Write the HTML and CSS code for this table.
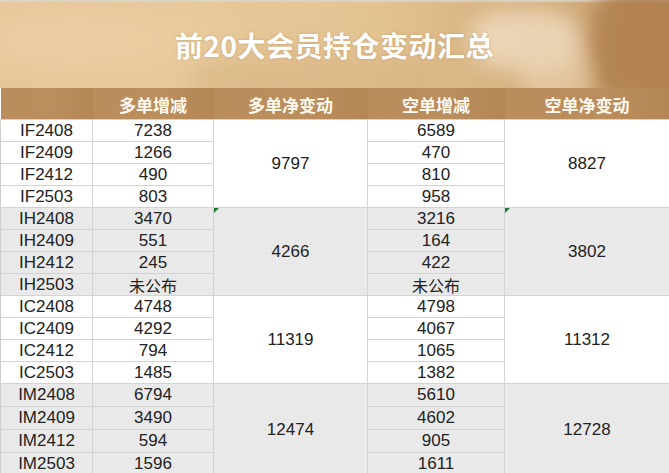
FILE: index.html
```html
<!DOCTYPE html>
<html lang="zh-CN">
<head>
<meta charset="utf-8">
<title>前20大会员持仓变动汇总</title>
<link rel="stylesheet" href="styles.css">
</head>
<body>
<div class="sheet">
  <div class="banner">
    <div class="blob b1"></div>
    <div class="blob b2"></div>
    <div class="blob b3"></div>
    <div class="blob b4"></div>
    <h1 class="title">前20大会员持仓变动汇总</h1>
  </div>
  <table class="grid">
    <colgroup>
      <col class="c1"><col class="c2"><col class="c3"><col class="c4"><col class="c5">
    </colgroup>
    <thead>
      <tr class="head">
        <th></th><th>多单增减</th><th>多单净变动</th><th>空单增减</th><th>空单净变动</th>
      </tr>
    </thead>
    <tbody class="g-white">
      <tr><td>IF2408</td><td>7238</td><td rowspan="4" class="merged">9797</td><td>6589</td><td rowspan="4" class="merged">8827</td></tr>
      <tr><td>IF2409</td><td>1266</td><td>470</td></tr>
      <tr><td>IF2412</td><td>490</td><td>810</td></tr>
      <tr><td>IF2503</td><td>803</td><td>958</td></tr>
    </tbody>
    <tbody class="g-grey">
      <tr><td>IH2408</td><td>3470</td><td rowspan="4" class="merged"><span class="flag"></span>4266</td><td>3216</td><td rowspan="4" class="merged"><span class="flag"></span>3802</td></tr>
      <tr><td>IH2409</td><td>551</td><td>164</td></tr>
      <tr><td>IH2412</td><td>245</td><td>422</td></tr>
      <tr><td>IH2503</td><td class="cjk">未公布</td><td class="cjk">未公布</td></tr>
    </tbody>
    <tbody class="g-white">
      <tr><td>IC2408</td><td>4748</td><td rowspan="4" class="merged">11319</td><td>4798</td><td rowspan="4" class="merged">11312</td></tr>
      <tr><td>IC2409</td><td>4292</td><td>4067</td></tr>
      <tr><td>IC2412</td><td>794</td><td>1065</td></tr>
      <tr><td>IC2503</td><td>1485</td><td>1382</td></tr>
    </tbody>
    <tbody class="g-grey tall">
      <tr><td>IM2408</td><td>6794</td><td rowspan="4" class="merged">12474</td><td>5610</td><td rowspan="4" class="merged">12728</td></tr>
      <tr><td>IM2409</td><td>3490</td><td>4602</td></tr>
      <tr><td>IM2412</td><td>594</td><td>905</td></tr>
      <tr><td>IM2503</td><td>1596</td><td>1611</td></tr>
    </tbody>
  </table>
</div>
</body>
</html>
```
FILE: styles.css
```css
html, body {
  margin: 0;
  padding: 0;
  background: #ffffff;
}

.sheet {
  width: 669px;
  overflow: hidden;
}

.banner {
  position: relative;
  height: 88px;
  overflow: hidden;
  display: flex;
  align-items: center;
  justify-content: center;
  background:
    linear-gradient(180deg, rgba(222,216,208,0.95) 0px, rgba(222,216,208,0) 3px),
    radial-gradient(ellipse 200px 60px at 60px 40px, rgba(240,214,172,0.6), rgba(240,214,172,0) 100%),
    linear-gradient(90deg, #e3c495 0%, #e6c899 30%, #e4c393 55%, #d9b584 72%, #c9a070 100%);
}

.blob {
  position: absolute;
  border-radius: 40%;
  filter: blur(10px);
}

.b1 {
  left: 590px;
  top: -20px;
  width: 120px;
  height: 130px;
  background: rgba(172, 124, 74, 0.8);
}

.b2 {
  left: 190px;
  top: 55px;
  width: 250px;
  height: 50px;
  background: rgba(210, 172, 124, 0.45);
}

.b3 {
  left: 470px;
  top: 10px;
  width: 110px;
  height: 60px;
  background: rgba(242, 226, 202, 0.7);
}

.b4 {
  left: 520px;
  top: 45px;
  width: 70px;
  height: 60px;
  background: rgba(236, 214, 182, 0.6);
}

.title {
  position: relative;
  margin: 0;
  padding-top: 2px;
  font-family: "Noto Sans CJK SC", "Liberation Sans", sans-serif;
  font-size: 28px;
  font-weight: 700;
  letter-spacing: 0.5px;
  color: #ffffff;
  text-shadow: 0 0 3px rgba(150, 105, 60, 0.35);
}

.grid {
  width: 669px;
  table-layout: fixed;
  border-collapse: collapse;
  font-family: "Liberation Sans", "Noto Sans CJK SC", sans-serif;
  font-size: 17px;
  color: #222222;
}

.c1 { width: 92px; }
.c2 { width: 121px; }
.c3 { width: 154px; }
.c4 { width: 137px; }
.c5 { width: 165px; }

.head th {
  height: 29px;
  padding: 0;
  background: linear-gradient(90deg, #b98d5c 0%, #ba8e5d 60%, #b38654 100%);
  color: #fff9ef;
  font-family: "Noto Sans CJK SC", sans-serif;
  font-size: 17px;
  font-weight: 700;
  text-align: center;
  vertical-align: middle;
  line-height: 20px;
  padding-top: 2px;
}

.grid td {
  height: 21px;
  padding: 0;
  text-align: center;
  vertical-align: middle;
  line-height: 20px;
  border: 1px solid #d3d3d3;
}

.grid td:first-child {
  border-left: 1px solid #cfcfcf;
}

.g-grey td {
  background: #e9e9e9;
}

.tall td {
  height: 22px;
}

.merged {
  position: relative;
}

.cjk {
  font-family: "Noto Sans CJK SC", sans-serif;
  font-size: 16px;
}

.flag {
  position: absolute;
  left: 0;
  top: 0;
  width: 0;
  height: 0;
  border-top: 5px solid #1f7a35;
  border-right: 5px solid transparent;
}
```
